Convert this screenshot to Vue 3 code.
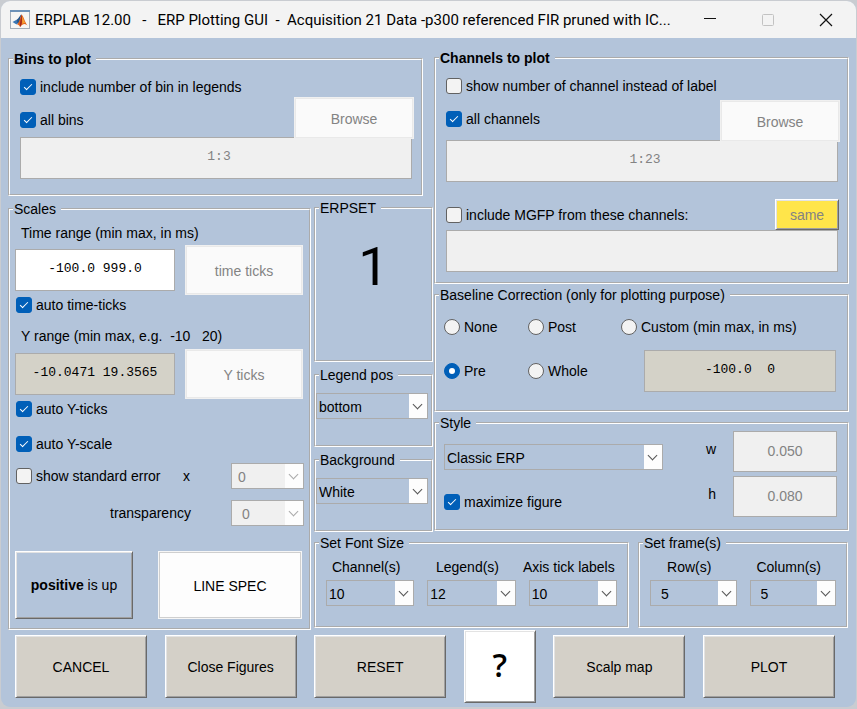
<script setup>
import { ref } from 'vue'

const includeBin = ref(true)
const allBins = ref(true)
const showNumber = ref(false)
const allChannels = ref(true)
const includeMgfp = ref(false)
const autoTime = ref(true)
const autoYTicks = ref(true)
const autoYScale = ref(true)
const showError = ref(false)
const maximize = ref(true)
const baseline = ref('pre')

const fonts = [
  { id: 'font-channel', label: 'Channel(s)', value: '10' },
  { id: 'font-legend', label: 'Legend(s)', value: '12' },
  { id: 'font-axis', label: 'Axis tick labels', value: '10' }
]
const frames = [
  { id: 'frame-rows', label: 'Row(s)', value: '5' },
  { id: 'frame-cols', label: 'Column(s)', value: '5' }
]
const title = 'ERPLAB 12.00   -   ERP Plotting GUI  -  Acquisition 21 Data -p300 referenced FIR pruned with IC...'
</script>

<template>
  <div class="window">
    <header class="titlebar">
      <svg class="logo" width="20" height="20" viewBox="0 0 20 20" aria-hidden="true">
        <rect x="0.5" y="0.5" width="19" height="18" fill="#f6f6f4" stroke="#a3adb8" />
        <rect x="0" y="0" width="20" height="2" fill="#6d92b8" />
        <path d="M2.5 12 L7 9.5 L9.5 11 L6.5 14.5 Z" fill="#3c78b4" />
        <path d="M7 9.5 C9 8.5 10 5 11.5 4.5 L9.5 12 L7.5 14 Z" fill="#24568c" />
        <path d="M11.5 4.5 C13.5 6 14.5 11.5 17.5 15.5 C15 13 13 13.5 10 17 C9.5 15.5 8.5 14.5 7 14.5 C9.5 12.5 10 8 11.5 4.5 Z" fill="#e2641e" />
        <path d="M11.5 4.5 C11 8 9.5 13 10 17 C12 15 12.5 11 11.5 4.5 Z" fill="#a3281b" />
        <path d="M12 6 C13.5 9 14.5 12 15.5 13 C14 12.8 13 13.5 12.3 14 Z" fill="#f6a032" />
      </svg>
      <h1 class="title">{{ title }}</h1>
      <div class="controls">
        <button type="button" aria-label="Minimize">
          <svg width="14" height="14" viewBox="0 0 14 14"><path d="M1 5.5H13" stroke="#111" /></svg>
        </button>
        <button type="button" aria-label="Maximize" disabled>
          <svg width="14" height="14" viewBox="0 0 14 14"><rect x="1.5" y="1.5" width="11" height="11" rx="1" fill="none" stroke="#c2c2c2" /></svg>
        </button>
        <button type="button" aria-label="Close">
          <svg width="14" height="14" viewBox="0 0 14 14"><path d="M1 1L13 13M13 1L1 13" stroke="#111" stroke-width="1.2" /></svg>
        </button>
      </div>
    </header>

    <main class="main">
      <fieldset class="panel bins">
        <legend class="strong">Bins to plot</legend>
        <div class="sources">
          <div class="head">
            <div class="checks">
              <label class="opt"><input v-model="includeBin" type="checkbox" />include number of bin in legends</label>
              <label class="opt"><input v-model="allBins" type="checkbox" />all bins</label>
            </div>
            <button type="button" class="flat browse" disabled>Browse</button>
          </div>
          <input class="edit mono" type="text" value="1:3" aria-label="Bins" disabled />
        </div>
      </fieldset>

      <div class="right">
        <fieldset class="panel channels">
          <legend class="strong">Channels to plot</legend>
          <div class="sources">
            <div class="head">
              <div class="checks">
                <label class="opt"><input v-model="showNumber" type="checkbox" />show number of channel instead of label</label>
                <label class="opt"><input v-model="allChannels" type="checkbox" />all channels</label>
              </div>
              <button type="button" class="flat browse" disabled>Browse</button>
            </div>
            <input class="edit mono" type="text" value="1:23" aria-label="Channels" disabled />
            <div class="mgfp">
              <label class="opt"><input v-model="includeMgfp" type="checkbox" />include MGFP from these channels:</label>
              <button type="button" class="raised same" disabled>same</button>
            </div>
            <input class="edit mono" type="text" value="" aria-label="MGFP channels" disabled />
          </div>
        </fieldset>

        <fieldset class="panel">
          <legend>Baseline Correction (only for plotting purpose)</legend>
          <div class="baseline">
            <label class="opt"><input v-model="baseline" type="radio" name="baseline" value="none" />None</label>
            <label class="opt"><input v-model="baseline" type="radio" name="baseline" value="post" />Post</label>
            <label class="opt"><input v-model="baseline" type="radio" name="baseline" value="custom" />Custom (min max, in ms)</label>
            <label class="opt"><input v-model="baseline" type="radio" name="baseline" value="pre" />Pre</label>
            <label class="opt"><input v-model="baseline" type="radio" name="baseline" value="whole" />Whole</label>
            <div class="custom"><input class="edit mono tan" type="text" value="-100.0  0" aria-label="Custom baseline" /></div>
          </div>
        </fieldset>

        <fieldset class="panel">
          <legend>Style</legend>
          <div class="style">
            <div class="style-left">
              <span class="pick"><select aria-label="Style"><option>Classic ERP</option></select></span>
              <label class="opt"><input v-model="maximize" type="checkbox" />maximize figure</label>
            </div>
            <div class="sizes">
              <label for="size-w">w</label>
              <input id="size-w" class="edit" type="text" value="0.050" disabled />
              <label for="size-h">h</label>
              <input id="size-h" class="edit" type="text" value="0.080" disabled />
            </div>
          </div>
        </fieldset>
      </div>

      <fieldset class="panel scales">
        <legend>Scales</legend>
        <div class="scales-body">
          <label class="range-label" for="time-range">Time range (min max, in ms)</label>
          <div class="range">
            <input id="time-range" class="edit mono white" type="text" value="-100.0 999.0" />
            <button type="button" class="flat" disabled>time ticks</button>
          </div>
          <label class="opt"><input v-model="autoTime" type="checkbox" />auto time-ticks</label>
          <label class="range-label second" for="y-range">Y range (min max, e.g.&nbsp; -10&nbsp;&nbsp; 20)</label>
          <div class="range">
            <input id="y-range" class="edit mono tan" type="text" value="-10.0471 19.3565" />
            <button type="button" class="flat" disabled>Y ticks</button>
          </div>
          <label class="opt"><input v-model="autoYTicks" type="checkbox" />auto Y-ticks</label>
          <label class="opt y-scale"><input v-model="autoYScale" type="checkbox" />auto Y-scale</label>
          <div class="error">
            <label class="opt"><input v-model="showError" type="checkbox" />show standard error</label>
            <label for="err-x">x</label>
            <span class="pick off"><select id="err-x" disabled><option>0</option></select></span>
          </div>
          <div class="error transparency">
            <label for="err-t">transparency</label>
            <span class="pick off indent"><select id="err-t" disabled><option>0</option></select></span>
          </div>
          <div class="pair">
            <button type="button" class="raised positive"><b>positive</b>&nbsp;is up</button>
            <button type="button" class="flat active">LINE SPEC</button>
          </div>
        </div>
      </fieldset>

      <div class="mid">
        <fieldset class="panel erpset">
          <legend>ERPSET</legend>
          <output class="big">1</output>
        </fieldset>
        <fieldset class="panel">
          <legend>Legend pos</legend>
          <div class="single"><span class="pick"><select aria-label="Legend pos"><option>bottom</option></select></span></div>
        </fieldset>
        <fieldset class="panel">
          <legend>Background</legend>
          <div class="single"><span class="pick"><select aria-label="Background"><option>White</option></select></span></div>
        </fieldset>
      </div>

      <div class="low">
        <fieldset class="panel">
          <legend>Set Font Size</legend>
          <div class="cols three">
            <div v-for="f in fonts" :key="f.id" class="col">
              <label :for="f.id">{{ f.label }}</label>
              <span class="pick"><select :id="f.id"><option>{{ f.value }}</option></select></span>
            </div>
          </div>
        </fieldset>
        <fieldset class="panel">
          <legend>Set frame(s)</legend>
          <div class="cols two">
            <div v-for="f in frames" :key="f.id" class="col">
              <label :for="f.id">{{ f.label }}</label>
              <span class="pick indent"><select :id="f.id"><option>{{ f.value }}</option></select></span>
            </div>
          </div>
        </fieldset>
      </div>
    </main>

    <footer class="actions">
      <button type="button" class="raised">CANCEL</button>
      <button type="button" class="raised">Close Figures</button>
      <button type="button" class="raised">RESET</button>
      <button type="button" class="raised help" aria-label="Help">?</button>
      <button type="button" class="raised">Scalp map</button>
      <button type="button" class="raised">PLOT</button>
    </footer>
  </div>
</template>

<style>
body {
  background: #c9ccd1;
}
</style>

<style scoped>
.window {
  margin: 1px;
  overflow: hidden;
  border-radius: 9px;
  background: #b3c4da;
  color: #000;
  font: 14px/20px "Liberation Sans", Arial, sans-serif;
}
.window *,
.window *::before,
.window *::after {
  box-sizing: border-box;
}
button,
input,
select {
  margin: 0;
  font: inherit;
  color: inherit;
}

.titlebar {
  display: flex;
  align-items: center;
  height: 37px;
  padding-left: 9px;
  background: #f3f3f3;
}
.logo {
  flex: none;
}
.title {
  flex: 1;
  min-width: 0;
  margin: 0 0 0 5px;
  overflow: hidden;
  white-space: pre;
  font: 400 15px/20px Roboto, "Noto Sans", sans-serif;
}
.controls {
  display: flex;
  flex: none;
  padding-right: 1px;
}
.controls button {
  display: grid;
  place-items: center;
  width: 58px;
  height: 37px;
  padding: 0;
  border: 0;
  background: none;
}

.main {
  display: grid;
  grid-template-columns: 303fr 122fr 416fr;
  grid-template-rows: auto 1fr auto;
  grid-template-areas:
    "bins bins right"
    "scales mid right"
    "scales low low";
  row-gap: 3px;
  padding: 12px 7px 0;
}
.panel {
  display: flex;
  flex-direction: column;
  min-width: 0;
  margin: 0;
  padding: 0;
  border: 2px groove #fff;
}
legend {
  margin-left: 3px;
  padding: 0 5px 0 1px;
  line-height: 16px;
}
.strong {
  font-weight: 700;
}
.right {
  grid-area: right;
  display: flex;
  flex-direction: column;
  gap: 3px;
  padding-left: 1px;
}
.bins {
  grid-area: bins;
  margin: 1px 10px 1px 0;
}
.sources {
  padding: 0 9px 15px 10px;
}
.channels .sources {
  padding-bottom: 10px;
}
.sources .edit {
  display: block;
  padding-left: 6px;
}
.head {
  display: flex;
  justify-content: space-between;
  align-items: flex-end;
}
.bins .head {
  height: 70px;
}
.channels .head {
  height: 74px;
}
.checks {
  display: flex;
  flex-direction: column;
  gap: 13px;
  align-self: flex-start;
  padding-top: 10px;
}
.browse {
  position: relative;
  width: 120px;
  height: 42px;
  margin: 0 -2px -2px 0;
}
.mgfp {
  display: flex;
  justify-content: space-between;
  align-items: center;
  margin: 17px -1px 0 0;
}

.opt {
  display: flex;
  align-items: center;
  gap: 4px;
  min-height: 20px;
  white-space: nowrap;
}
.opt input {
  appearance: none;
  display: grid;
  place-items: center;
  flex: none;
  width: 16px;
  height: 16px;
  border: 1px solid #626262;
  border-radius: 3px;
  background: #f3f3f3;
}
.opt input:checked {
  border-color: #005fb8;
  background: #005fb8;
}
.opt input[type="checkbox"]:checked::after {
  content: "";
  width: 8px;
  height: 4px;
  margin-bottom: 2px;
  border: solid #fff;
  border-width: 0 0 1px 1px;
  transform: rotate(-45deg);
}
.opt input[type="radio"] {
  border-radius: 50%;
}
.opt input[type="radio"]:checked::after {
  content: "";
  width: 6px;
  height: 6px;
  border-radius: 50%;
  background: #fff;
}

.edit {
  width: 100%;
  height: 42px;
  padding: 0 0 3px;
  border: 1px solid #ababab;
  border-radius: 0;
  background: #f0f0f0;
  text-align: center;
}
.edit:disabled {
  color: #838383;
}
.mono {
  font-family: "Liberation Mono", "Courier New", monospace;
  font-size: 13px;
}
.white {
  background: #fff;
}
.tan {
  background: #d4d2c8;
}

.flat {
  padding: 2px 0 0;
  border: 1px solid #f0f0f0;
  border-radius: 0;
  box-shadow: inset 0 0 0 1px #e9e9e9;
  background: #fafafa;
}
.flat:disabled {
  color: #838383;
}
.raised {
  padding: 0;
  border: 1px solid;
  border-color: #fff #696969 #696969 #fff;
  box-shadow: inset 1px 1px #e3e3e3, inset -1px -1px #a0a0a0;
  background: #d4d0c8;
}
.same {
  width: 64px;
  height: 31px;
  background: #ffe54a;
}
.same:disabled {
  color: #838383;
}

.pick {
  display: grid;
  align-items: center;
}
.pick select {
  grid-area: 1 / 1;
  appearance: none;
  width: 100%;
  height: 26px;
  padding: 2px 20px 0 2px;
  border: 1px solid #ababab;
  border-radius: 0;
  background: linear-gradient(#fdfdfd, #fdfdfd) right / 18px 100% no-repeat #b3c4da;
}
.pick::after {
  content: "";
  grid-area: 1 / 1;
  justify-self: end;
  width: 7px;
  height: 7px;
  margin: 0 7px 4px 0;
  border: solid #555;
  border-width: 0 1px 1px 0;
  transform: rotate(45deg);
  pointer-events: none;
}
.off select {
  padding-left: 6px;
  background-color: #f0f0f0;
  color: #838383;
  opacity: 1;
}
.off::after {
  border-color: #aaa;
}
.indent select {
  padding-left: 10px;
}

.baseline {
  display: grid;
  grid-template-columns: 84px 93px 1fr;
  row-gap: 13px;
  padding: 14px 11px 18px 8px;
}
.custom {
  padding-left: 23px;
}
.custom .edit {
  display: block;
}
.style {
  display: flex;
  justify-content: space-between;
  padding: 0 10px 12px 8px;
}
.style-left {
  display: flex;
  flex-direction: column;
  gap: 22px;
  width: 219px;
  padding-top: 13px;
}
.sizes {
  display: grid;
  grid-template-columns: auto 104px;
  gap: 4px 17px;
  justify-items: end;
}
.sizes label {
  padding-top: 8px;
}
.sizes .edit {
  height: 41px;
  padding-bottom: 1px;
}

.scales {
  grid-area: scales;
  margin-top: 1px;
}
.scales-body {
  display: flex;
  flex-direction: column;
  padding: 0 6px 9px 5px;
}
.range-label {
  margin: 6px 0 2px 6px;
  white-space: nowrap;
}
.second {
  margin: 11px 0 3px 6px;
}
.range {
  display: grid;
  grid-template-columns: 1fr 118px;
  align-items: center;
  gap: 10px;
}
.range .flat {
  height: 50px;
}
.scales .opt {
  margin-left: 1px;
}
.scales .y-scale {
  margin-top: 15px;
}
.error {
  display: grid;
  grid-template-columns: 1fr 48px 73px;
  align-items: center;
  margin: 9px -1px 0 0;
}
.transparency {
  grid-template-columns: 1fr 73px;
  margin-top: 11px;
}
.transparency label {
  padding-left: 95px;
}
.pair {
  display: flex;
  justify-content: space-between;
  margin: 25px 1px 0 0;
}
.pair button {
  height: 68px;
}
.positive {
  width: 118px;
  background: #b3c4da;
}
.active {
  width: 144px;
  border-color: #f6f6f6;
  box-shadow: inset 0 0 0 1px #cfcfcf;
  background: #fdfdfd;
}

.mid {
  grid-area: mid;
  display: flex;
  flex-direction: column;
  gap: 5px;
  padding-left: 3px;
}
.erpset {
  flex: 1;
}
.big {
  padding-top: 24px;
  font: 54px/54px Roboto, Arial, sans-serif;
  text-align: center;
}
.single {
  padding: 10px 3px 26px 0;
}

.low {
  grid-area: low;
  display: grid;
  grid-template-columns: 315fr 210fr;
  gap: 9px;
  padding: 0 1px 2px 3px;
}
.cols {
  display: grid;
  gap: 13px;
  padding: 6px 10px 20px;
}
.three {
  grid-template-columns: repeat(3, 1fr);
}
.two {
  grid-template-columns: repeat(2, 1fr);
}
.col {
  min-width: 0;
}
.col label {
  display: flex;
  justify-content: center;
  margin-bottom: 3px;
  padding-right: 8px;
  white-space: nowrap;
}

.actions {
  display: flex;
  justify-content: space-between;
  align-items: center;
  padding: 0 21px 4px 14px;
}
.actions .raised {
  width: 132px;
  height: 63px;
}
.actions .help {
  width: 72px;
  height: 73px;
  padding-bottom: 4px;
  background: #fff;
  font: 600 32px/32px "Open Sans", "Noto Sans", sans-serif;
}
</style>
